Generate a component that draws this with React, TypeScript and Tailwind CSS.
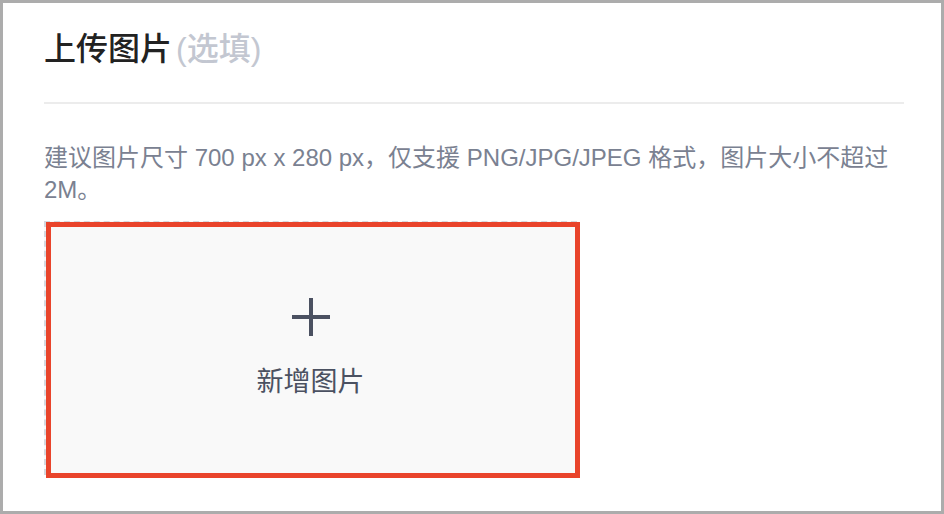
const font = {
  fontFamily: '"Liberation Sans", "Noto Sans CJK SC", sans-serif',
};

function PlusIcon() {
  return (
    <svg width="38" height="38" viewBox="0 0 38 38" aria-hidden>
      <path d="M19 0v38M0 19h38" stroke="#4b5161" strokeWidth="4" />
    </svg>
  );
}

function UploadTile() {
  return (
    <div className="relative mt-[15px] h-[254px] w-[533px]">
      <button
        type="button"
        className="flex h-full w-full flex-col items-center justify-center border-2 border-dashed border-[#d5d8de] bg-[#f9f9f9]"
      >
        <PlusIcon />
        <span className="mt-[30px] text-[27px] leading-[32px] text-[#4b5161]">
          新增图片
        </span>
      </button>
      {/* 选中态高亮框 */}
      <div className="pointer-events-none absolute -bottom-[3px] -right-[3px] left-[2px] top-[1px] border-[5px] border-[#e9442b]" />
    </div>
  );
}

export default function App() {
  return (
    <div
      className="h-[514px] w-[944px] border-[3px] border-[#acacac] bg-white px-[41px]"
      style={font}
    >
      <h2 className="pt-[26px] text-[32px] font-medium leading-[40px] text-[#222222]">
        上传图片
        <span className="ml-[4px] text-[#c3c7d1]">(选填)</span>
      </h2>
      <div className="mt-[33px] h-[2px] w-[860px] bg-[#ececec]" />
      <p className="mt-[38px] w-[860px] text-[24px] leading-[32px] text-[#7a8191]">
        建议图片尺寸 700 px x 280 px，仅支援 PNG/JPG/JPEG 格式，图片大小不超过 2M。
      </p>
      <UploadTile />
    </div>
  );
}
